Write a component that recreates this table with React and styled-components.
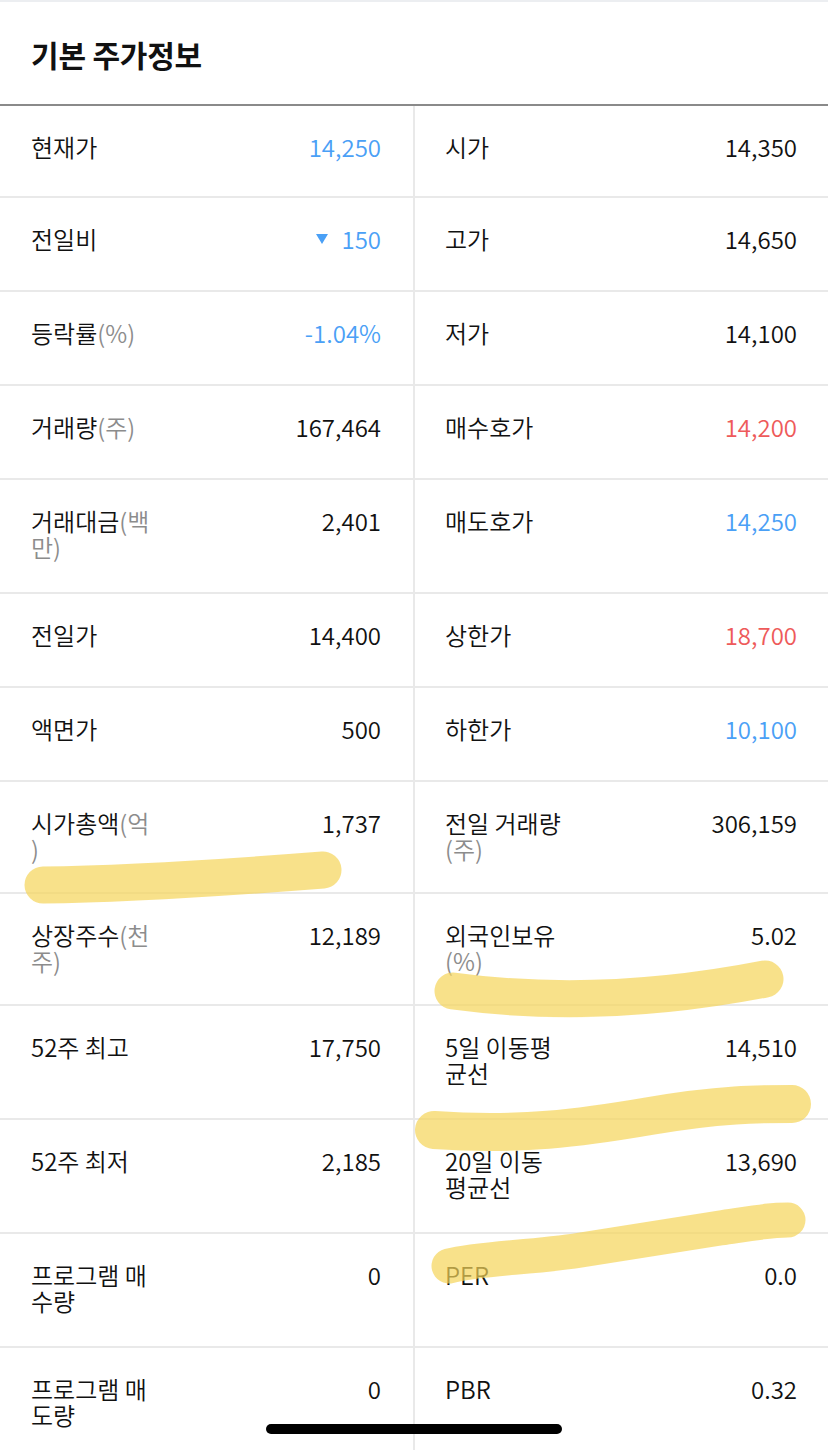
import React from "react";
import styled, { createGlobalStyle } from "styled-components";

const GlobalStyle = createGlobalStyle`
  html, body {
    margin: 0;
    padding: 0;
    background: #ffffff;
  }
  body {
    font-family: "Noto Sans CJK KR", "Noto Sans", sans-serif;
    color: #111111;
    -webkit-font-smoothing: antialiased;
  }
`;

const Page = styled.div`
  position: relative;
  width: 828px;
  background: #ffffff;
  border-top: 2px solid #eceef1;
`;

const Header = styled.header`
  display: flex;
  align-items: center;
  height: 104px;
  box-sizing: border-box;
  padding: 1px 31px 0;
  border-bottom: 2px solid #8a8a8a;
`;

const Title = styled.h2`
  margin: 0;
  font-size: 30px;
  font-weight: 700;
  letter-spacing: -0.2px;
  color: #111111;
`;

const Table = styled.div`
  display: flex;
  flex-direction: column;
`;

const Row = styled.div`
  display: grid;
  grid-template-columns: 415px 1fr;
  min-height: 94px;
  box-sizing: border-box;
  border-bottom: 2px solid #e9e9e9;
  &:first-child {
    min-height: 92px;
  }
`;

const Cell = styled.div`
  display: flex;
  justify-content: space-between;
  align-items: flex-start;
  padding: 28px ${(p) => (p.$side === "left" ? "32px" : "31px")}
    ${(p) => (p.$tight ? "30px" : "32px")}
    ${(p) => (p.$side === "left" ? "31px" : "30px")};
  border-right: ${(p) => (p.$side === "left" ? "2px solid #e9e9e9" : "none")};
  font-size: 24px;
  line-height: 26px;
`;

const Label = styled.div`
  color: #111111;
  font-weight: 350;
  white-space: nowrap;
`;

const Unit = styled.span`
  color: #8c8c8c;
`;

const toneColor = {
  up: "#ee5a5a",
  down: "#4aa0f6",
  plain: "#111111",
};

const Value = styled.div`
  display: inline-flex;
  align-items: center;
  gap: 13px;
  color: ${(p) => toneColor[p.$tone || "plain"]};
  font-weight: 350;
  white-space: nowrap;
`;

const DownArrow = styled.span`
  display: inline-block;
  width: 0;
  height: 0;
  border-left: 6px solid transparent;
  border-right: 6px solid transparent;
  border-top: 10px solid #4aa0f6;
`;

const HomeIndicator = styled.div`
  position: fixed;
  left: 50%;
  bottom: 16px;
  width: 296px;
  height: 10px;
  margin-left: -148px;
  border-radius: 5px;
  background: #000000;
  z-index: 3;
`;

const Highlights = styled.svg`
  position: absolute;
  top: -2px;
  left: 0;
  width: 828px;
  height: 1450px;
  pointer-events: none;
  z-index: 2;
`;

const Stroke = styled.path`
  fill: none;
  stroke: rgba(245, 212, 88, 0.7);
  stroke-linecap: round;
  stroke-linejoin: round;
`;

const rows = [
  [
    { label: "현재가", value: "14,250", tone: "down" },
    { label: "시가", value: "14,350" },
  ],
  [
    { label: "전일비", value: "150", tone: "down", arrow: true },
    { label: "고가", value: "14,650" },
  ],
  [
    { label: "등락률", unit: "(%)", value: "-1.04%", tone: "down" },
    { label: "저가", value: "14,100" },
  ],
  [
    { label: "거래량", unit: "(주)", value: "167,464" },
    { label: "매수호가", value: "14,200", tone: "up" },
  ],
  [
    { label: "거래대금", unit: ["(백", "만)"], value: "2,401" },
    { label: "매도호가", value: "14,250", tone: "down" },
  ],
  [
    { label: "전일가", value: "14,400" },
    { label: "상한가", value: "18,700", tone: "up" },
  ],
  [
    { label: "액면가", value: "500" },
    { label: "하한가", value: "10,100", tone: "down" },
  ],
  [
    { label: "시가총액", unit: ["(억", ")"], value: "1,737", tight: true },
    { label: ["전일 거래량"], unit: ["", "(주)"], value: "306,159", tight: true },
  ],
  [
    { label: "상장주수", unit: ["(천", "주)"], value: "12,189", tight: true },
    { label: ["외국인보유"], unit: ["", "(%)"], value: "5.02", tight: true },
  ],
  [
    { label: "52주 최고", value: "17,750" },
    { label: ["5일 이동평", "균선"], value: "14,510" },
  ],
  [
    { label: "52주 최저", value: "2,185" },
    { label: ["20일 이동", "평균선"], value: "13,690" },
  ],
  [
    { label: ["프로그램 매", "수량"], value: "0" },
    { label: "PER", value: "0.0" },
  ],
  [
    { label: ["프로그램 매", "도량"], value: "0" },
    { label: "PBR", value: "0.32" },
  ],
];

function LabelText({ label, unit }) {
  const names = Array.isArray(label) ? label : [label];
  const units = Array.isArray(unit) ? unit : unit ? [unit] : [];
  const count = Math.max(names.length, units.length);
  const lines = [];
  for (let i = 0; i < count; i++) {
    lines.push(
      <React.Fragment key={i}>
        {i > 0 && <br />}
        {names[i] || ""}
        {units[i] ? <Unit>{units[i]}</Unit> : null}
      </React.Fragment>
    );
  }
  return <Label>{lines}</Label>;
}

function InfoCell({ side, item }) {
  return (
    <Cell $side={side} $tight={item.tight}>
      <LabelText label={item.label} unit={item.unit} />
      <Value $tone={item.tone}>
        {item.arrow && <DownArrow />}
        {item.value}
      </Value>
    </Cell>
  );
}

export default function App() {
  return (
    <>
      <GlobalStyle />
      <Page>
        <Header>
          <Title>기본 주가정보</Title>
        </Header>
        <Table>
          {rows.map(([left, right], i) => (
            <Row key={i}>
              <InfoCell side="left" item={left} />
              <InfoCell side="right" item={right} />
            </Row>
          ))}
        </Table>
        <Highlights viewBox="0 0 828 1450">
          <Stroke strokeWidth="37" d="M43 885 C130 884, 220 878, 323 870" />
          <Stroke strokeWidth="37" d="M453 991 Q601 1011 765 979" />
          <Stroke
            strokeWidth="38"
            d="M434 1130 C520 1136, 580 1128, 650 1116 S760 1104, 792 1104"
          />
          <Stroke
            strokeWidth="35"
            d="M449 1266 C480 1258, 530 1258, 581 1250 S680 1234, 720 1228 S770 1220, 788 1220"
          />
        </Highlights>
      </Page>
      <HomeIndicator />
    </>
  );
}
